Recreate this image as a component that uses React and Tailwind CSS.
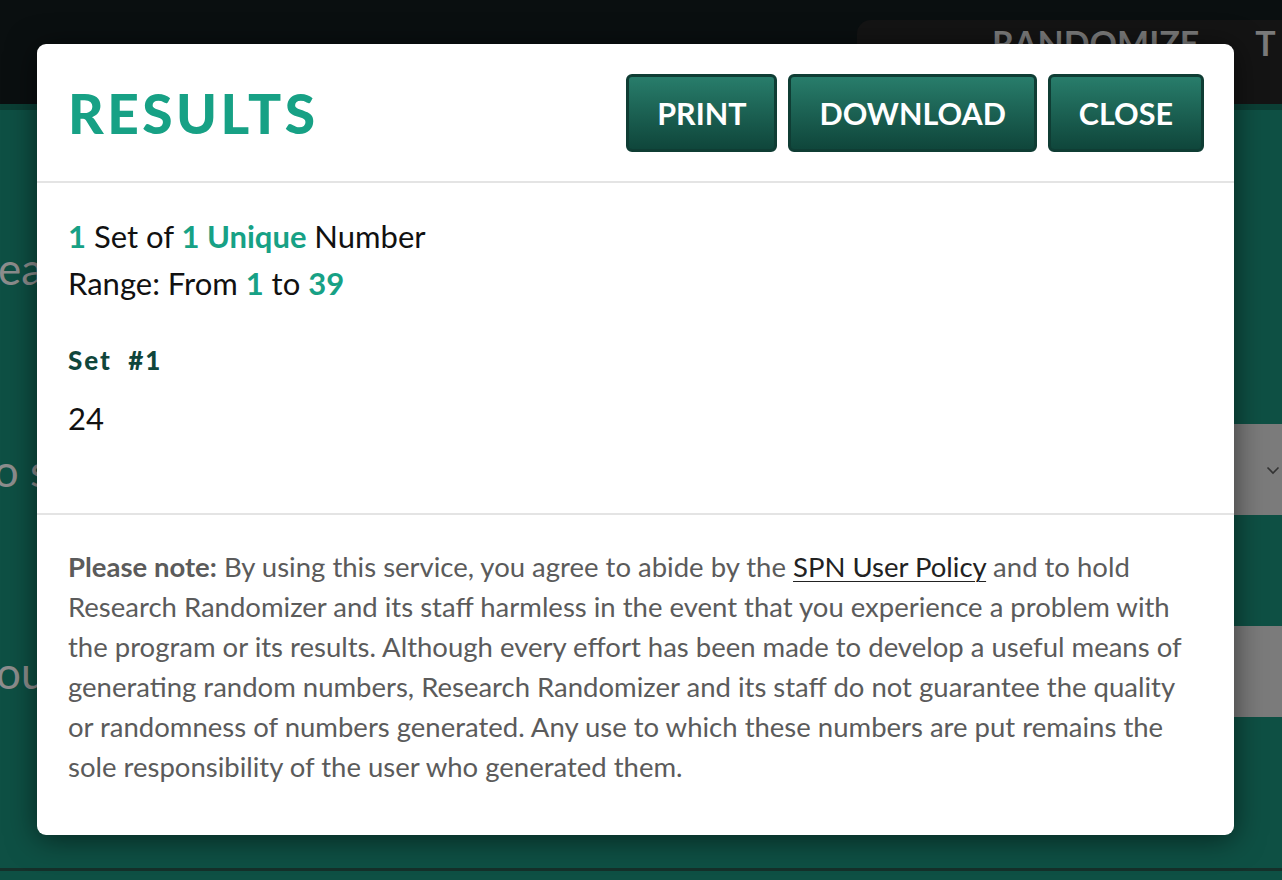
import React from "react";

export default function App() {
  return (
    <div
      className="relative w-[1282px] h-[880px] overflow-hidden bg-[#0e5044]"
      style={{ fontFamily: "Lato, 'Open Sans', sans-serif" }}
    >
      {/* background page */}
      <div className="flex flex-col h-full">
        <div className="h-[104px] bg-[#0a0f10] flex justify-end items-end shrink-0">
          <div className="w-[425px] h-[84px] bg-[#141414] rounded-tl-[14px] flex items-start pt-[6px] pl-[135px] gap-[56px] text-[#7a7a7a] font-bold text-[34px] leading-none whitespace-nowrap overflow-hidden">
            <span>RANDOMIZE</span>
            <span>T</span>
          </div>
        </div>
        <div className="h-[6px] bg-[#0b3f35] shrink-0" />
        <div className="flex-1 flex flex-col pt-[112px] gap-[111px] text-[#8d8d8d] text-[44px] leading-none">
          <div className="h-[91px] flex items-center whitespace-nowrap">
            <span className="-ml-[2px]">each</span>
          </div>
          <div className="h-[91px] flex items-center justify-between whitespace-nowrap">
            <span className="-ml-[22px]">to set</span>
            <div className="w-[48px] h-full bg-[#7b7b7b] flex items-center justify-end pr-[2px]">
              <svg width="14" height="10" viewBox="0 0 14 10" fill="none">
                <path d="M1.5 2.5 L7 8 L12.5 2.5" stroke="#333" strokeWidth="1.6" />
              </svg>
            </div>
          </div>
          <div className="h-[91px] flex items-center justify-between whitespace-nowrap">
            <span className="-ml-[26px]">you</span>
            <div className="w-[48px] h-full bg-[#7b7b7b]" />
          </div>
        </div>
        <div className="h-[3px] bg-[#15302a] shrink-0 mb-[9px]" />
      </div>

      {/* modal */}
      <div className="absolute left-[37px] top-[44px] w-[1197px] bg-white rounded-[9px] shadow-[0_4px_30px_rgba(0,0,0,0.55)]">
        <div className="flex items-center justify-between pl-[31px] pr-[30px] pt-[30px] pb-[29px] border-b-2 border-[#e4e4e4]">
          <h1 className="text-[55px] font-black tracking-[3.5px] text-[#17a185] leading-none">RESULTS</h1>
          <div className="flex gap-[11px]">
            {["PRINT", "DOWNLOAD", "CLOSE"].map((t) => (
              <button
                key={t}
                className="h-[78px] px-[28px] rounded-[6px] border-[3px] border-[#0f3d34] bg-gradient-to-b from-[#287d6b] to-[#0f463b] text-white font-bold text-[30.5px] leading-none"
              >
                {t}
              </button>
            ))}
          </div>
        </div>

        <div className="pl-[31px] pr-[30px] pt-[30px] pb-[79px] border-b-2 border-[#e4e4e4]">
          <div className="text-[31px] leading-[47px] text-[#111]">
            <div>
              <span className="font-bold text-[#17a185]">1</span> Set of{" "}
              <span className="font-bold text-[#17a185]">1 Unique</span> Number
            </div>
            <div>
              Range: From <span className="font-bold text-[#17a185]">1</span> to{" "}
              <span className="font-bold text-[#17a185]">39</span>
            </div>
          </div>
          <div className="mt-[40px] text-[26px] font-black tracking-[2px] text-[#10463b] leading-none whitespace-pre">
            Set  #1
          </div>
          <div className="mt-[30px] text-[31px] leading-none text-[#111]">24</div>
        </div>

        <div className="pl-[31px] pr-[31px] pt-[32px] pb-[48px] text-[27.5px] leading-[40px] text-[#5b5b5b]">
          <span className="font-bold">Please note:</span> By using this service, you agree to abide by the{" "}
          <a className="text-[#222] underline underline-offset-[4px] decoration-1">SPN User Policy</a> and to hold
          Research Randomizer and its staff harmless in the event that you experience a problem with the program or
          its results. Although every effort has been made to develop a useful means of generating random numbers,
          Research Randomizer and its staff do not guarantee the quality or randomness of numbers generated. Any use
          to which these numbers are put remains the sole responsibility of the user who generated them.
        </div>
      </div>
    </div>
  );
}
